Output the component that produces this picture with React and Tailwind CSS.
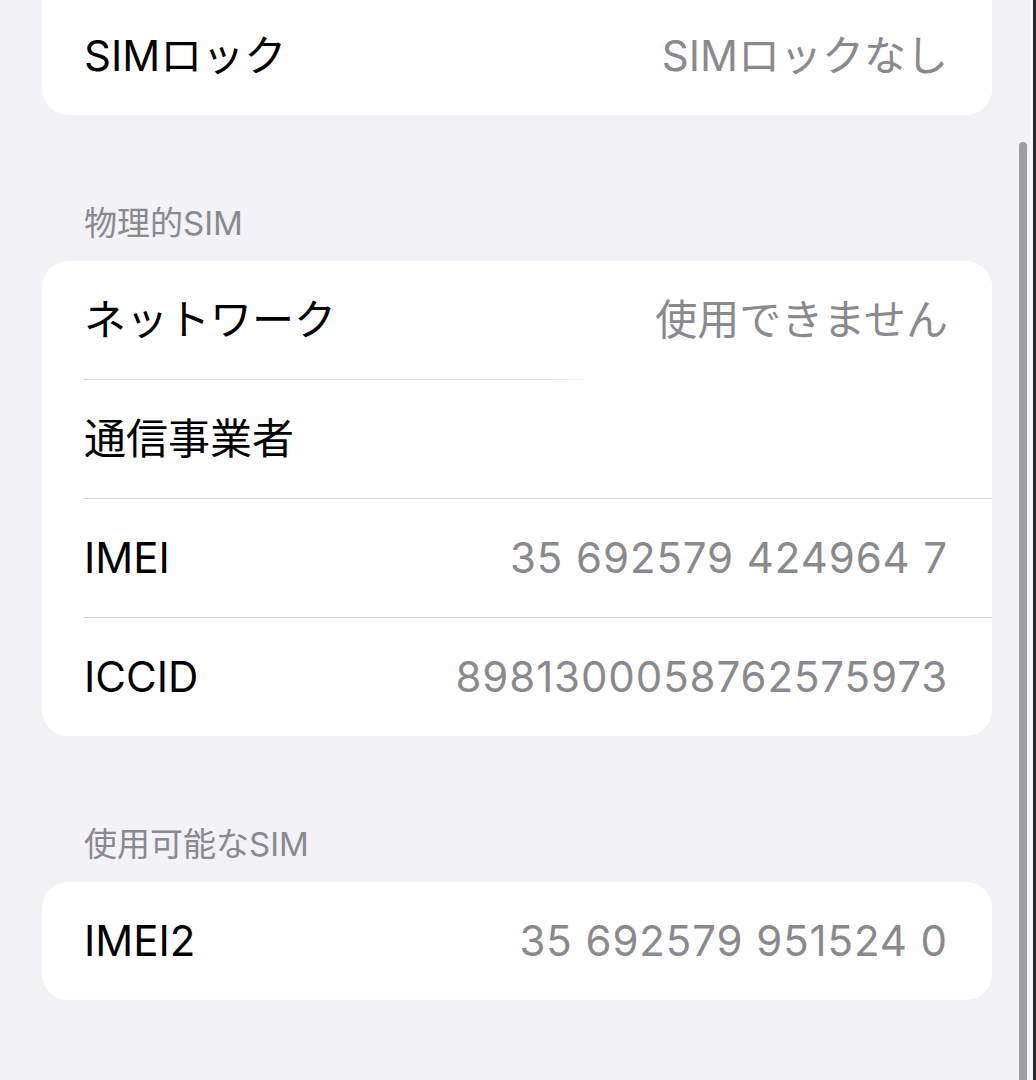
import React from 'react';

const font = { fontFamily: "Inter, 'Noto Sans CJK JP', sans-serif" };

function Row({ label, value, digits, divider, fade }) {
  return (
    <div className="pl-[42px]">
      <div className="flex h-[118px] items-center justify-between pr-[44px]">
        <span className="text-[42px] leading-none text-black">{label}</span>
        {value && (
          <span
            className={
              digits
                ? 'text-[42px] leading-none tracking-[0.9px] text-[#8a8a8e]'
                : 'text-[42px] leading-none text-[#8a8a8e]'
            }
          >
            {value}
          </span>
        )}
      </div>
      {divider && (
        <div
          className={
            fade
              ? 'h-px bg-linear-to-r from-[#d6d6da] from-[50%] to-white to-[56%]'
              : 'h-px bg-[#d6d6da]'
          }
        />
      )}
    </div>
  );
}

function Header({ children }) {
  return (
    <div className="mt-[89px] mb-[19px] flex h-[38px] items-center pl-[42px] text-[33px] leading-none text-[#8a8a8e]">
      {children}
    </div>
  );
}

export default function App() {
  return (
    <div className="relative h-[1080px] w-[1036px] overflow-hidden bg-[#f2f2f7]" style={font}>
      <div className="pl-[42px] pr-[44px]">
        <div className="-mt-[3px] rounded-b-[26px] bg-white">
          <Row label="SIMロック" value="SIMロックなし" />
        </div>

        <Header>物理的SIM</Header>
        <div className="rounded-[26px] bg-white">
          <Row label="ネットワーク" value="使用できません" divider fade />
          <Row label="通信事業者" divider />
          <Row label="IMEI" value="35 692579 424964 7" digits divider />
          <Row label="ICCID" value="8981300058762575973" digits />
        </div>

        <Header>使用可能なSIM</Header>
        <div className="rounded-[26px] bg-white">
          <Row label="IMEI2" value="35 692579 951524 0" digits />
        </div>
      </div>

      {/* scroll indicator and screen edge */}
      <div className="absolute top-[142px] bottom-0 left-[1019px] w-[8px] rounded-t-full bg-[#9d9da2]" />
      <div className="absolute top-0 bottom-0 left-[1030px] w-[2px] bg-white/70" />
      <div className="absolute top-0 bottom-0 right-0 w-[3px] bg-[#2a2a2c]" />
    </div>
  );
}
